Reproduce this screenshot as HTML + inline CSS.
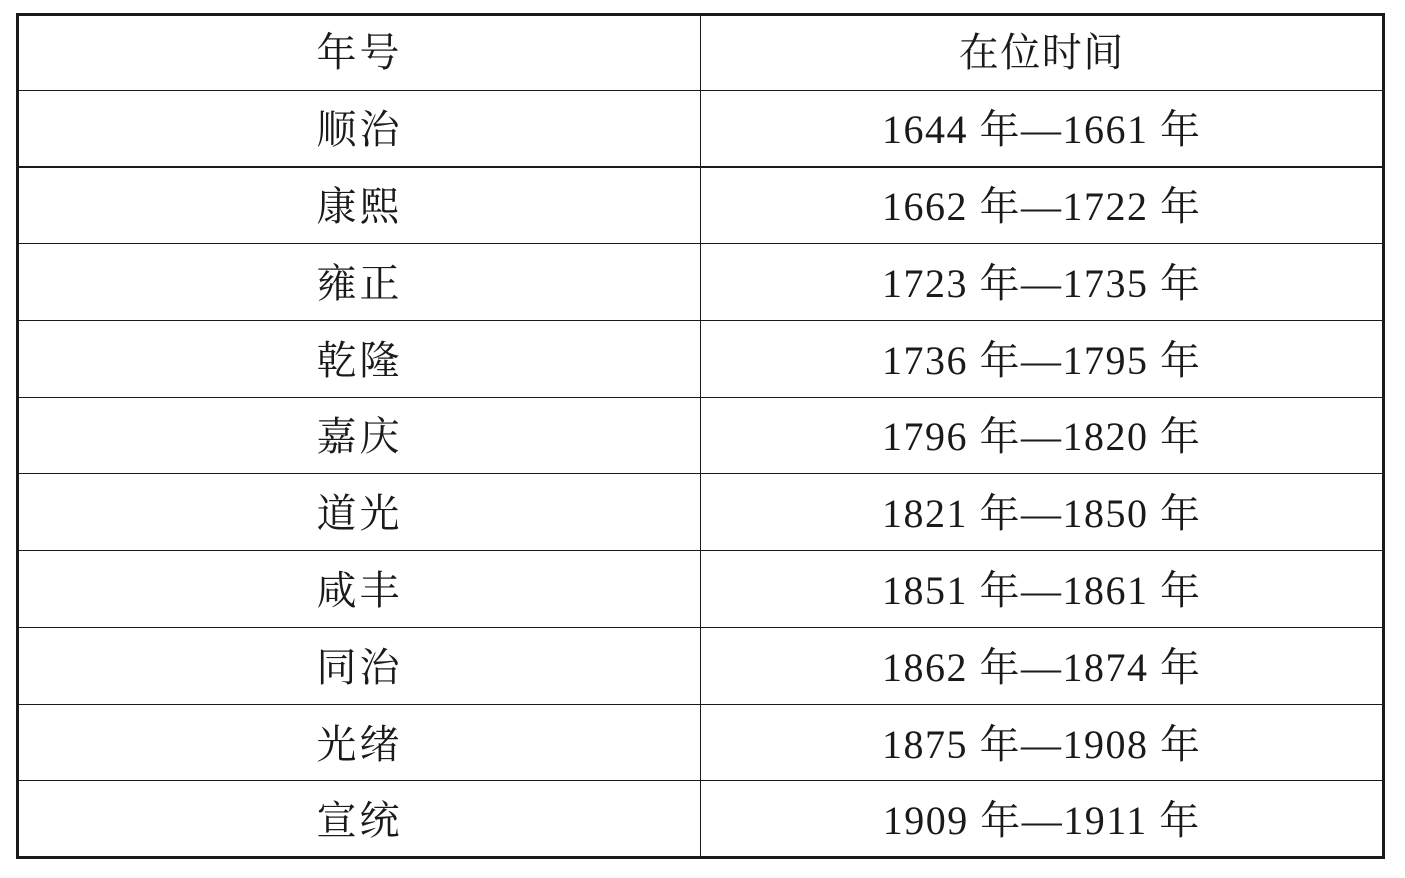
<!DOCTYPE html>
<html><head><meta charset="utf-8"><style>
body{margin:0;width:1405px;height:878px;background:#fff;position:relative;overflow:hidden;font-family:"Liberation Serif","Noto Serif CJK SC",serif;color:#1a1a1a}
.b{position:absolute;background:#1a1a1a}
.t{position:absolute;height:40px;line-height:40px;font-size:40px;text-align:center;white-space:nowrap}
.l{left:258px;width:200px;letter-spacing:3px;text-indent:3px}
.r{left:741px;width:600px;letter-spacing:1.5px;text-indent:1.5px}
</style></head><body>
<div class="b" style="left:16px;top:13px;width:1369px;height:3px"></div>
<div class="b" style="left:16px;top:856px;width:1369px;height:3px"></div>
<div class="b" style="left:16px;top:13px;width:3px;height:846px"></div>
<div class="b" style="left:1382px;top:13px;width:3px;height:846px"></div>
<div class="b" style="left:700px;top:13px;width:1px;height:846px"></div>
<div class="b" style="left:16px;top:90px;width:1369px;height:1px"></div>
<div class="b" style="left:16px;top:166px;width:1369px;height:2px"></div>
<div class="b" style="left:16px;top:243px;width:1369px;height:1px"></div>
<div class="b" style="left:16px;top:320px;width:1369px;height:1px"></div>
<div class="b" style="left:16px;top:397px;width:1369px;height:1px"></div>
<div class="b" style="left:16px;top:473px;width:1369px;height:1px"></div>
<div class="b" style="left:16px;top:550px;width:1369px;height:1px"></div>
<div class="b" style="left:16px;top:627px;width:1369px;height:1px"></div>
<div class="b" style="left:16px;top:704px;width:1369px;height:1px"></div>
<div class="b" style="left:16px;top:780px;width:1369px;height:1px"></div>

<div class="t l" style="top:33px">年号</div><div class="t r" style="top:33px">在位时间</div>
<div class="t l" style="top:110px">顺治</div><div class="t r" style="top:110px">1644 年—1661 年</div>
<div class="t l" style="top:187px">康熙</div><div class="t r" style="top:187px">1662 年—1722 年</div>
<div class="t l" style="top:264px">雍正</div><div class="t r" style="top:264px">1723 年—1735 年</div>
<div class="t l" style="top:341px">乾隆</div><div class="t r" style="top:341px">1736 年—1795 年</div>
<div class="t l" style="top:417px">嘉庆</div><div class="t r" style="top:417px">1796 年—1820 年</div>
<div class="t l" style="top:494px">道光</div><div class="t r" style="top:494px">1821 年—1850 年</div>
<div class="t l" style="top:571px">咸丰</div><div class="t r" style="top:571px">1851 年—1861 年</div>
<div class="t l" style="top:648px">同治</div><div class="t r" style="top:648px">1862 年—1874 年</div>
<div class="t l" style="top:725px">光绪</div><div class="t r" style="top:725px">1875 年—1908 年</div>
<div class="t l" style="top:801px">宣统</div><div class="t r" style="top:801px">1909 年—1911 年</div>
</body></html>
